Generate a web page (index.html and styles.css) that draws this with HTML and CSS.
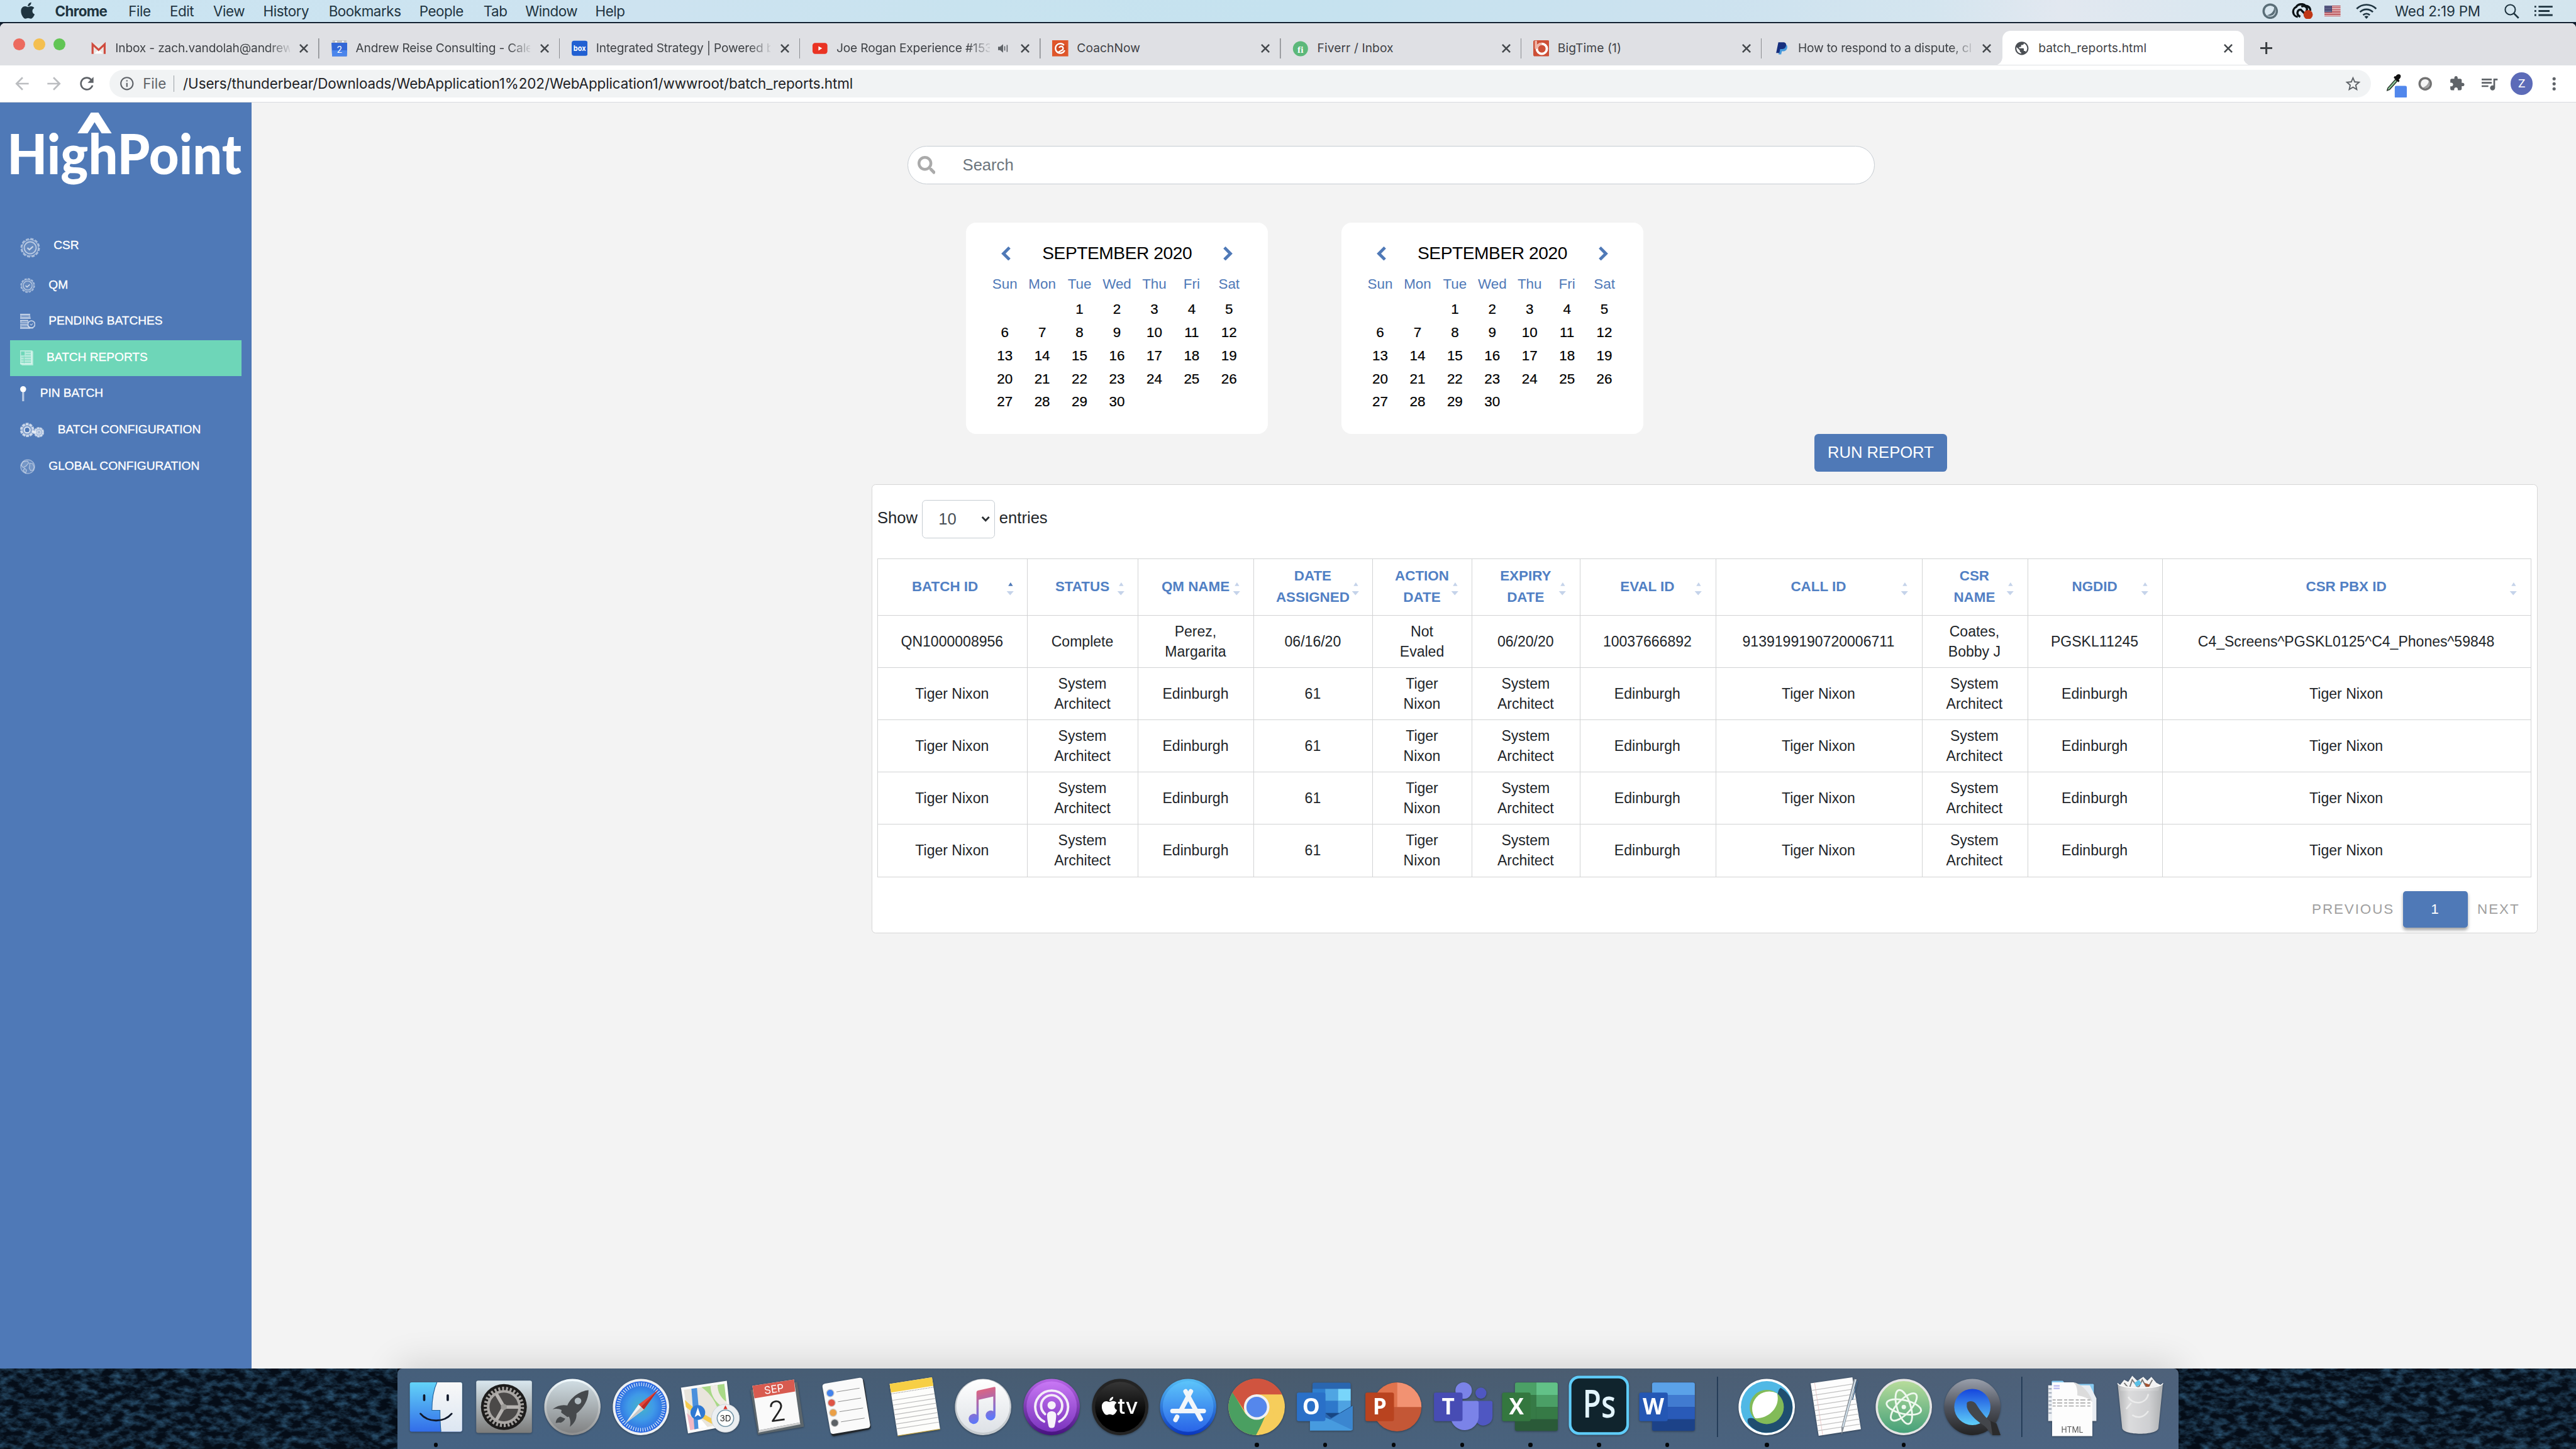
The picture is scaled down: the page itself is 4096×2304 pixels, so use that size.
FILE: index.html
```html
<!DOCTYPE html>
<html lang="en">
<head>
<meta charset="utf-8">
<title>batch_reports.html</title>
<link rel="stylesheet" href="styles.css">
</head>
<body>
<svg class="defs" width="0" height="0" aria-hidden="true">
  <defs>
    <symbol id="apple" viewBox="0 0 384 512"><path d="M318.7 268.7c-.2-36.7 16.4-64.4 50-84.8-18.8-26.9-47.2-41.7-84.7-44.6-35.5-2.8-74.3 20.7-88.5 20.7-15 0-49.4-19.7-76.4-19.7C63.3 141.2 4 184.8 4 273.5q0 39.3 14.4 81.2c12.8 36.7 59 126.7 107.2 125.2 25.2-.6 43-17.9 75.8-17.9 31.8 0 48.3 17.9 76.4 17.9 48.6-.7 90.4-82.5 102.6-119.3-65.2-30.7-61.7-90-61.7-91.9zm-56.6-164.2c27.3-32.4 24.8-61.9 24-72.5-24.1 1.4-52 16.4-67.9 34.9-17.5 19.8-27.8 44.3-25.6 71.9 26.1 2 49.9-11.4 69.5-34.3z"/></symbol>
    <symbol id="close" viewBox="0 0 10 10"><path d="M1.2 1.2l7.6 7.6M8.8 1.2L1.2 8.8" fill="none" stroke="#45494d" stroke-width="1.6"/></symbol>
    <symbol id="sort" viewBox="0 0 8 14"><path class="sort-up" d="M4.3 .6l2.3 3.6H2z"/><path class="sort-down" d="M.4 9.4h7L3.9 13.4z"/></symbol>
    <symbol id="seal" viewBox="0 0 20 20"><circle cx="10" cy="10" r="9" fill="none" stroke="#fff" stroke-width="1.4" stroke-opacity=".5" stroke-dasharray="3.2 1.5"/><circle cx="10" cy="10" r="8" fill="none" stroke="#fff" stroke-width="1" stroke-opacity=".45"/><circle cx="10" cy="10" r="6" fill="#fff" fill-opacity=".12" stroke="#fff" stroke-width="1.3" stroke-opacity=".55"/><path d="M7.2 10.1l2 1.8 3.6-3.2" fill="none" stroke="#fff" stroke-width="1.4" stroke-opacity=".65"/></symbol>
    <linearGradient id="gSilver" x2="0" y2="1"><stop offset="0" stop-color="#d9e7ee"/><stop offset="1" stop-color="#7b7b7a"/></linearGradient>
    <linearGradient id="gLaunch" x2="0" y2="1"><stop offset="0" stop-color="#cfdce2"/><stop offset="1" stop-color="#818283"/></linearGradient>
    <linearGradient id="gRim" x2="0" y2="1"><stop offset="0" stop-color="#f2fbff"/><stop offset="1" stop-color="#8e8e8e"/></linearGradient>
    <linearGradient id="gFinder" x2="0" y2="1"><stop offset="0" stop-color="#63d3f8"/><stop offset="1" stop-color="#326de9"/></linearGradient>
    <linearGradient id="gFinderR" x2="0" y2="1"><stop offset="0" stop-color="#f8f8f8"/><stop offset="1" stop-color="#dce6f2"/></linearGradient>
    <radialGradient id="gSafari"><stop offset="0" stop-color="#45b3c8"/><stop offset=".5" stop-color="#3f9ae8"/><stop offset="1" stop-color="#2a66e0"/></radialGradient>
    <linearGradient id="gMusic" x2="0" y2="1"><stop offset="0" stop-color="#fff"/><stop offset="1" stop-color="#dde1e6"/></linearGradient>
    <linearGradient id="gNote" x1="0" x2=".2" y2="1"><stop offset="0" stop-color="#f2636c"/><stop offset=".45" stop-color="#b268a8"/><stop offset="1" stop-color="#5a78fb"/></linearGradient>
    <linearGradient id="gPod" x2="0" y2="1"><stop offset="0" stop-color="#c877f4"/><stop offset="1" stop-color="#7a34bd"/></linearGradient>
    <linearGradient id="gPodRim" x2="0" y2="1"><stop offset="0" stop-color="#b765e6"/><stop offset="1" stop-color="#46127f"/></linearGradient>
    <linearGradient id="gTv" x2="0" y2="1"><stop offset="0" stop-color="#363636"/><stop offset=".7" stop-color="#000"/></linearGradient>
    <linearGradient id="gStore" x2="0" y2="1"><stop offset="0" stop-color="#5cc4fa"/><stop offset="1" stop-color="#2964e8"/></linearGradient>
    <linearGradient id="gStoreRim" x2="0" y2="1"><stop offset="0" stop-color="#55bdf5"/><stop offset="1" stop-color="#0a36bd"/></linearGradient>
    <linearGradient id="gAtom" x2="0" y2="1"><stop offset="0" stop-color="#b7dc9b"/><stop offset="1" stop-color="#45a079"/></linearGradient>
    <linearGradient id="gQt" x2="0" y2="1"><stop offset="0" stop-color="#9aa0ac"/><stop offset=".5" stop-color="#50545e"/><stop offset="1" stop-color="#232323"/></linearGradient>
    <linearGradient id="gQtIn" x2="0" y2="1"><stop offset="0" stop-color="#1545dd"/><stop offset="1" stop-color="#5fd0fa"/></linearGradient>
    <linearGradient id="gTrash" x2="1" y2="0"><stop offset="0" stop-color="#b9babb"/><stop offset=".25" stop-color="#e4e4e4"/><stop offset=".7" stop-color="#d6d7d8"/><stop offset="1" stop-color="#b2b4b5"/></linearGradient>
    <filter id="waves" x="0" y="0" width="100%" height="100%"><feTurbulence type="fractalNoise" baseFrequency=".09 .16" numOctaves="4" seed="7"/><feColorMatrix values="0 0 0 0 .03  0 0 0 0 .11  0 0 0 0 .21  1.8 0 0 0 -.68"/></filter>
  </defs>
</svg>

<header class="menubar">
  <nav class="menubar-left">
    <svg class="apple" viewBox="0 0 384 512" fill="#1f3440"><use href="#apple"/></svg>
    <b>Chrome</b><span>File</span><span>Edit</span><span>View</span><span>History</span><span>Bookmarks</span><span>People</span><span>Tab</span><span>Window</span><span>Help</span>
  </nav>
  <div class="menubar-right">
    <svg width="16" height="16" viewBox="0 0 16 16"><circle cx="8" cy="8" r="6.600" fill="none" stroke="#5a6e78" stroke-width="2.200"/><path d="M11.800 2.800c.6 4-1.600 8-7 9.200 4 1.800 8-.6 8.200-4.200 0-2-.4-3.800-1.200-5z" fill="#5a6e78"/></svg>
    <svg width="21" height="16" viewBox="0 0 21 16"><path d="M6 13.700A5.200 5.200 0 0 1 4.500 3.800C6 .6 12 .2 13.500 2.500c3.400.4 5 2.500 5 5M8.500 13.500C4 11.500 5.500 6 9 6.500l4 4M9.500 3.500c4-2 7 1.500 5 4.500" fill="none" stroke="#0c1216" stroke-width="2.100"/><circle cx="16.300" cy="11.400" r="4.600" fill="#bf3716"/></svg>
    <svg width="16" height="11" viewBox="0 0 16 11"><rect width="16" height="11" fill="#f4eeee"/><path d="M0 .4h16M0 2.100h16M0 3.800h16M0 5.500h16M0 7.200h16M0 8.900h16M0 10.600h16" stroke="#ad2b35" stroke-width=".85"/><rect width="7.500" height="6.500" fill="#41436f"/><path d="M.8 1.200h6.400M.8 2.800h6.400M.8 4.400h6.400M.8 5.800h6.400" stroke="#c9cbe0" stroke-width=".5" stroke-dasharray=".6 .7"/></svg>
    <svg width="21" height="15" viewBox="0 0 21 15"><g fill="none" stroke="#1f3440" stroke-width="1.700"><path d="M.8 5a13.600 13.600 0 0 1 19.400 0"/><path d="M4.100 8.200a9 9 0 0 1 12.800 0"/><path d="M7.200 11.200a4.700 4.700 0 0 1 6.600 0"/></g><path d="M10.500 15l-2-2.200a2.800 2.800 0 0 1 4 0z" fill="#1f3440"/></svg>
    <span class="clock">Wed 2:19 PM</span>
    <svg width="15" height="15" viewBox="0 0 15 15"><circle cx="5.900" cy="5.900" r="5" fill="none" stroke="#1f3440" stroke-width="1.300"/><path d="M9.600 9.600l4.600 4.600" stroke="#1f3440" stroke-width="1.700"/></svg>
    <svg width="18" height="11" viewBox="0 0 18 11"><path d="M0 1h1.700M4 1h14M0 5.300h1.700M4 5.300h11M0 9.400h1.700M4 9.400h14" stroke="#1f3440" stroke-width="1.800"/></svg>
  </div>
</header>

<section class="window">
  <div class="tabstrip">
    <div class="lights"><i class="red"></i><i class="yellow"></i><i class="green"></i></div>
    <div class="tab">
      <svg class="fav" viewBox="0 0 16 16"><path d="M1.500 3.500h13v10h-13z" fill="#e9e6e3"/><path d="M4 13.300L8 9l4 4.300z" fill="#fff"/><path d="M2 13.600V4l6 5.600L14 4v9.600" fill="none" stroke="#cf4b3e" stroke-width="2"/></svg>
      <span class="title faded">Inbox - zach.vandolah@andrew</span><svg class="x"><use href="#close"/></svg>
    </div>
    <div class="tab">
      <svg class="fav" viewBox="0 0 16 16"><path d="M1 0h14v3H1z" fill="#c2c2c2"/><circle cx="4.600" cy="1.400" r=".9" fill="#fff"/><circle cx="11.400" cy="1.400" r=".9" fill="#fff"/><path d="M0 2.500h16L15.300 16H.7z" fill="#3367d6"/><path d="M.5 10h15l-.3 6H.7z" fill="#4a85ec"/><text x="8" y="12.600" text-anchor="middle" font-size="9" fill="#fff" font-family="Roboto,sans-serif">2</text></svg>
      <span class="title faded">Andrew Reise Consulting - Cale</span><svg class="x"><use href="#close"/></svg>
    </div>
    <div class="tab">
      <svg class="fav" viewBox="0 0 16 16"><rect y=".5" width="16" height="15" rx="2.500" fill="#2160d2"/><text x="8" y="10.700" text-anchor="middle" font-size="7.500" font-weight="700" fill="#fff" textLength="12.500" lengthAdjust="spacingAndGlyphs" font-family="Inter,sans-serif">box</text></svg>
      <span class="title faded">Integrated Strategy | Powered b</span><svg class="x"><use href="#close"/></svg>
    </div>
    <div class="tab audible">
      <svg class="fav" viewBox="0 0 16 16"><rect x=".6" y="2.600" width="14.800" height="11" rx="2.600" fill="#ea3323"/><path d="M6.500 5.900v4.400L10.200 8z" fill="#fff"/></svg>
      <span class="title faded">Joe Rogan Experience #153</span>
      <svg class="audio" viewBox="0 0 10 10"><path d="M0 3.300h2L5 .8v8.400L2 6.700H0z" fill="#5f6368"/><path d="M6.600 2.800v4.400M9 1.600v6.800" stroke="#5f6368"/></svg>
      <svg class="x"><use href="#close"/></svg>
    </div>
    <div class="tab">
      <svg class="fav" viewBox="0 0 16 16"><rect width="16" height="16" fill="#e0562a"/><circle cx="8" cy="8" r="6.200" fill="#d04a22"/><path d="M11.800 5A4.800 4.800 0 1 0 12.500 10M7 7.500a2 2 0 1 1 2.500 2.500L5 12.500" fill="none" stroke="#fff" stroke-width="1.500"/></svg>
      <span class="title">CoachNow</span><svg class="x"><use href="#close"/></svg>
    </div>
    <div class="tab">
      <svg class="fav" viewBox="0 0 16 16"><circle cx="8" cy="8.500" r="7.500" fill="#5cb87a"/><text x="8" y="12.300" text-anchor="middle" font-size="9.500" font-weight="700" fill="#fff" font-family="Liberation Serif,serif">fi</text></svg>
      <span class="title">Fiverr / Inbox</span><svg class="x"><use href="#close"/></svg>
    </div>
    <div class="tab">
      <svg class="fav" viewBox="0 0 16 16"><rect width="16" height="16" rx="1.600" fill="#cd4f36"/><circle cx="8.500" cy="8.500" r="5" fill="none" stroke="#fff" stroke-width="2.400"/><path d="M2.600 .5v8" stroke="#eeb5a8" stroke-width="2.200"/><path d="M3.500 8.500a5 5 0 0 1 5-5" fill="none" stroke="#eeb5a8" stroke-width="2.400"/></svg>
      <span class="title">BigTime (1)</span><svg class="x"><use href="#close"/></svg>
    </div>
    <div class="tab last">
      <svg class="fav" viewBox="0 0 16 16"><path d="M6.500 4h4.500c2.500 0 3 1.800 2.600 3.600-.6 2.400-2 3.300-4 3.300H8.300L7.600 14H5z" fill="#4598db"/><path d="M4.800 2h4.800c2.600 0 3.200 1.700 2.800 3.500-.6 2.500-2.200 3.300-4.400 3.300H6.600l-.8 3.800H2.600z" fill="#172f7e"/></svg>
      <span class="title faded">How to respond to a dispute, cl</span><svg class="x"><use href="#close"/></svg>
    </div>
    <div class="tab active">
      <svg class="fav" viewBox="0 0 24 24" fill="#4b4f54"><path d="M12 2C6.480 2 2 6.480 2 12s4.480 10 10 10 10-4.480 10-10S17.520 2 12 2zm-1 17.930c-3.950-.49-7-3.850-7-7.930 0-.62.08-1.210.21-1.790L9 15v1c0 1.100.9 2 2 2v1.930zm6.900-2.540c-.26-.81-1-1.390-1.900-1.390h-1v-3c0-.55-.45-1-1-1H8v-2h2c.55 0 1-.45 1-1V7h2c1.100 0 2-.9 2-2v-.41c2.930 1.190 5 4.060 5 7.410 0 2.080-.8 3.970-2.100 5.390z"/></svg>
      <span class="title">batch_reports.html</span><svg class="x"><use href="#close"/></svg>
    </div>
    <svg class="newtab" viewBox="0 0 12 12"><path d="M6 0v12M0 6h12" stroke="#3c4043" stroke-width="1.900"/></svg>
  </div>

  <div class="toolbar">
    <div class="slot"><svg width="20" height="20" viewBox="0 0 24 24" fill="#bbbdc0"><path d="M20 11H7.830l5.590-5.590L12 4l-8 8 8 8 1.410-1.410L7.830 13H20v-2z"/></svg></div>
    <div class="slot"><svg width="20" height="20" viewBox="0 0 24 24" fill="#bbbdc0"><path d="M4 11h12.170l-5.590-5.590L12 4l8 8-8 8-1.410-1.410L16.170 13H4v-2z"/></svg></div>
    <div class="slot"><svg width="20" height="20" viewBox="0 0 24 24" fill="#5f6368"><path d="M17.650 6.350C16.200 4.900 14.210 4 12 4c-4.420 0-7.990 3.580-7.990 8s3.570 8 7.990 8c3.730 0 6.840-2.550 7.730-6h-2.080c-.82 2.330-3.040 4-5.650 4-3.310 0-6-2.690-6-6s2.690-6 6-6c1.660 0 3.140.69 4.220 1.780L13 11h7V4l-2.350 2.350z"/></svg></div>
    <div class="omnibox">
      <svg width="16" height="16" viewBox="0 0 24 24" fill="#5f6368"><path d="M11 7h2v2h-2zm0 4h2v6h-2zm1-9C6.480 2 2 6.480 2 12s4.480 10 10 10 10-4.480 10-10S17.520 2 12 2zm0 18c-4.410 0-8-3.590-8-8s3.590-8 8-8 8 3.590 8 8-3.590 8-8 8z"/></svg>
      <span class="scheme">File</span>
      <span class="url">/Users/thunderbear/Downloads/WebApplication1%202/WebApplication1/wwwroot/batch_reports.html</span>
      <svg class="star" width="18" height="18" viewBox="0 0 24 24" fill="#5f6368"><path d="M22 9.240l-7.190-.62L12 2 9.190 8.630 2 9.240l5.460 4.730L5.820 21 12 17.270 18.180 21l-1.630-7.030L22 9.240zM12 15.400l-3.760 2.270 1-4.280-3.320-2.880 4.380-.38L12 6.100l1.710 4.040 4.380.38-3.320 2.880 1 4.280L12 15.400z"/></svg>
    </div>
    <div class="slot"><svg width="32" height="28" viewBox="0 0 32 28"><path d="M10.500 20.500l.6-2.300 7.500-8.500 1.800 1.600-7.500 8.300z" fill="#8fc79a" stroke="#26352a" stroke-width=".9"/><path d="M17 8l4.800 4.400 1-1.400-.8-1.200c2-1.800 2.600-3.800 1.300-4.900-1.400-1.200-3.300-.2-4.500 1.600l-.9-.3z" fill="#111"/><rect x="18" y="16" width="12" height="12" rx="1.500" fill="#5187ec"/></svg></div>
    <div class="slot"><svg width="14" height="14" viewBox="0 0 14 14"><circle cx="7" cy="7" r="5.600" fill="#f5f5f5" stroke="#727272" stroke-width="2.200"/><path d="M10.500 3.200C10.600 7 8.500 9.800 4 11c4.500 1.400 7.500-1 7.300-4.500z" fill="#a0a0a0"/></svg></div>
    <div class="slot"><svg width="16" height="16" viewBox="0 0 24 24" fill="#5f6368"><path d="M20.500 11H19V7c0-1.100-.9-2-2-2h-4V3.500C13 2.120 11.880 1 10.500 1S8 2.120 8 3.500V5H4c-1.100 0-1.990.9-1.990 2v3.800H3.500c1.490 0 2.700 1.210 2.700 2.700s-1.210 2.700-2.700 2.700H2V20c0 1.100.9 2 2 2h3.800v-1.500c0-1.490 1.210-2.700 2.700-2.700 1.490 0 2.700 1.210 2.700 2.700V22H17c1.100 0 2-.9 2-2v-4h1.500c1.380 0 2.500-1.120 2.500-2.500S21.880 11 20.500 11z"/></svg></div>
    <div class="slot"><svg width="20" height="20" viewBox="0 0 24 24" fill="#5f6368"><path d="M15 6H3v2h12V6zm0 4H3v2h12v-2zM3 16h8v-2H3v2zM17 6v8.180c-.31-.11-.65-.18-1-.18-1.660 0-3 1.340-3 3s1.340 3 3 3 3-1.340 3-3V8h3V6h-5z"/></svg></div>
    <div class="slot"><span class="avatar">Z</span></div>
    <div class="slot"><svg width="4" height="14" viewBox="0 0 4 14" fill="#5f6368"><circle cx="2" cy="2" r="1.600"/><circle cx="2" cy="7" r="1.600"/><circle cx="2" cy="12" r="1.600"/></svg></div>
  </div>

  <div class="page">
    <aside class="sidebar">
      <svg class="logo" viewBox="0 0 230 72" fill="#fff"><path d="M80.400 0h7.400L101 20.700H91L84 9.500l-7 11.200H67z"/><text x="-3" y="61.300" textLength="233" lengthAdjust="spacingAndGlyphs">HighPoint</text></svg>
      <nav class="nav">
        <a class="csr"><svg width="20" height="20"><use href="#seal"/></svg><span>CSR</span></a>
        <a><svg width="15" height="15"><use href="#seal"/></svg><span>QM</span></a>
        <a><svg width="15" height="15" viewBox="0 0 15 15"><path d="M0 0h9.800l.7 4.800H0zM0 6h8v3.400H0zM0 10.600h8.500l1.500 4.200H0z" fill="#fff" fill-opacity=".45"/><path d="M1.500 2.400h7M1.500 7.600h5.500M1.500 12.500h6" stroke="#4f79b7" stroke-opacity=".6" stroke-width=".9"/><path d="M0 .4h10M0 4.500h10.500M0 6.800h8M0 10.300h7M0 14.300h13" stroke="#fff" stroke-opacity=".55" stroke-width=".8"/><circle cx="11.200" cy="10.400" r="3.500" fill="#4f79b7" stroke="#fff" stroke-opacity=".65" stroke-width="1.100"/><path d="M9.800 10.200l1.300 1 1.500-1.600" fill="none" stroke="#fff" stroke-opacity=".6" stroke-width=".8"/></svg><span>PENDING BATCHES</span></a>
        <a class="current"><svg width="13" height="15" viewBox="0 0 13 15"><path d="M0 0h11.800L13 1.200V15H2L0 13.500z" fill="#fff" fill-opacity=".5"/><path d="M1.200 1.500h3v3.200h-3zM5.500 2h5M5.500 4.300h5M1.200 7h9.500M1.200 9.500h9.500M1.200 12h9.500M4 6v7" stroke="#6ed6b8" stroke-width=".8" fill="#6ed6b8" stroke-opacity=".75"/><path d="M0 13.400h11.500V1" fill="none" stroke="#fff" stroke-opacity=".5"/></svg><span>BATCH REPORTS</span></a>
        <a><svg width="6.500" height="15" viewBox="0 0 6.500 15"><path d="M3 5v10" stroke="#fff" stroke-opacity=".6" stroke-width="2"/><circle cx="3" cy="3" r="3" fill="#fff"/></svg><span>PIN BATCH</span></a>
        <a><svg width="24" height="15" viewBox="0 0 24 15"><circle cx="7" cy="7.300" r="6" fill="#fff" fill-opacity=".35" stroke="#fff" stroke-width="2.200" stroke-opacity=".65" stroke-dasharray="2.900 .9"/><circle cx="7" cy="7.300" r="2.800" fill="#4f79b7" stroke="#fff" stroke-opacity=".8" stroke-width="1.100"/><circle cx="18.700" cy="9.600" r="4.300" fill="#fff" fill-opacity=".5" stroke="#fff" stroke-width="1.800" stroke-opacity=".6" stroke-dasharray="2.500 .5"/><path d="M12 9.500h4" stroke="#fff" stroke-opacity=".55" stroke-width="3"/><circle cx="18.700" cy="9.600" r="1.800" fill="none" stroke="#fff" stroke-opacity=".5" stroke-width=".8"/></svg><span>BATCH CONFIGURATION</span></a>
        <a><svg width="15" height="15" viewBox="0 0 15 15"><circle cx="7.500" cy="7.500" r="6.900" fill="#fff" fill-opacity=".12" stroke="#fff" stroke-width=".9" stroke-opacity=".4"/><path d="M3 2.500l4.500-.5 1 1.800-2.500 3L3 8.500 1 6zM9.500 4l3 .5 1.500 3.500-1 3-2.500.5-1.500-2.500.5-3zM4.500 9l2 2-1 3-2.500-2.500z" fill="#fff" fill-opacity=".12" stroke="#fff" stroke-width=".8" stroke-opacity=".45"/></svg><span>GLOBAL CONFIGURATION</span></a>
      </nav>
    </aside>

    <main class="main">
      <div class="search">
        <svg width="18" height="18" viewBox="0 0 512 512" fill="#aaa"><path d="M505 442.700L405.300 343c-4.500-4.500-10.600-7-17-7H372c27.600-35.300 44-79.700 44-128C416 93.100 322.900 0 208 0S0 93.100 0 208s93.100 208 208 208c48.300 0 92.700-16.400 128-44v16.300c0 6.400 2.500 12.500 7 17l99.700 99.700c9.400 9.400 24.600 9.400 33.900 0l28.300-28.300c9.400-9.400 9.400-24.600.1-34zM208 336c-70.700 0-128-57.200-128-128 0-70.700 57.200-128 128-128 70.700 0 128 57.200 128 128 0 70.700-57.200 128-128 128z"/></svg>
        <span>Search</span>
      </div>

      <div class="calendars">
        <section class="calendar">
          <header><svg viewBox="0 0 10 14"><path d="M8.200 1L2.200 7l6 6"/></svg><h2>SEPTEMBER 2020</h2><svg viewBox="0 0 10 14"><path d="M1.800 1l6 6-6 6"/></svg></header>
          <div class="days names"><span>Sun</span><span>Mon</span><span>Tue</span><span>Wed</span><span>Thu</span><span>Fri</span><span>Sat</span></div>
          <div class="days"><span></span><span></span><span>1</span><span>2</span><span>3</span><span>4</span><span>5</span><span>6</span><span>7</span><span>8</span><span>9</span><span>10</span><span>11</span><span>12</span><span>13</span><span>14</span><span>15</span><span>16</span><span>17</span><span>18</span><span>19</span><span>20</span><span>21</span><span>22</span><span>23</span><span>24</span><span>25</span><span>26</span><span>27</span><span>28</span><span>29</span><span>30</span></div>
        </section>
        <section class="calendar">
          <header><svg viewBox="0 0 10 14"><path d="M8.200 1L2.200 7l6 6"/></svg><h2>SEPTEMBER 2020</h2><svg viewBox="0 0 10 14"><path d="M1.800 1l6 6-6 6"/></svg></header>
          <div class="days names"><span>Sun</span><span>Mon</span><span>Tue</span><span>Wed</span><span>Thu</span><span>Fri</span><span>Sat</span></div>
          <div class="days"><span></span><span></span><span>1</span><span>2</span><span>3</span><span>4</span><span>5</span><span>6</span><span>7</span><span>8</span><span>9</span><span>10</span><span>11</span><span>12</span><span>13</span><span>14</span><span>15</span><span>16</span><span>17</span><span>18</span><span>19</span><span>20</span><span>21</span><span>22</span><span>23</span><span>24</span><span>25</span><span>26</span><span>27</span><span>28</span><span>29</span><span>30</span></div>
        </section>
      </div>

      <button class="run">RUN REPORT</button>

      <section class="card">
        <div class="length"><span>Show</span><span class="select">10<svg viewBox="0 0 10 7"><path d="M1.200 1.200L5 5.200l3.800-4" fill="none" stroke="#2b2f33" stroke-width="2"/></svg></span><span>entries</span></div>
        <table>
          <colgroup><col class="c1"><col class="c2"><col class="c3"><col class="c4"><col class="c5"><col class="c6"><col class="c7"><col class="c8"><col class="c9"><col class="c10"><col class="c11"></colgroup>
          <thead><tr>
            <th class="sorted">BATCH ID<svg><use href="#sort"/></svg></th>
            <th>STATUS<svg><use href="#sort"/></svg></th>
            <th>QM NAME<svg><use href="#sort"/></svg></th>
            <th>DATE<br>ASSIGNED<svg><use href="#sort"/></svg></th>
            <th>ACTION<br>DATE<svg><use href="#sort"/></svg></th>
            <th>EXPIRY<br>DATE<svg><use href="#sort"/></svg></th>
            <th>EVAL ID<svg><use href="#sort"/></svg></th>
            <th>CALL ID<svg><use href="#sort"/></svg></th>
            <th>CSR<br>NAME<svg><use href="#sort"/></svg></th>
            <th>NGDID<svg><use href="#sort"/></svg></th>
            <th>CSR PBX ID<svg><use href="#sort"/></svg></th>
          </tr></thead>
          <tbody>
            <tr><td>QN1000008956</td><td>Complete</td><td>Perez,<br>Margarita</td><td>06/16/20</td><td>Not<br>Evaled</td><td>06/20/20</td><td>10037666892</td><td>9139199190720006711</td><td>Coates,<br>Bobby J</td><td>PGSKL11245</td><td>C4_Screens^PGSKL0125^C4_Phones^59848</td></tr>
            <tr><td>Tiger Nixon</td><td>System<br>Architect</td><td>Edinburgh</td><td>61</td><td>Tiger<br>Nixon</td><td>System<br>Architect</td><td>Edinburgh</td><td>Tiger Nixon</td><td>System<br>Architect</td><td>Edinburgh</td><td>Tiger Nixon</td></tr>
            <tr><td>Tiger Nixon</td><td>System<br>Architect</td><td>Edinburgh</td><td>61</td><td>Tiger<br>Nixon</td><td>System<br>Architect</td><td>Edinburgh</td><td>Tiger Nixon</td><td>System<br>Architect</td><td>Edinburgh</td><td>Tiger Nixon</td></tr>
            <tr><td>Tiger Nixon</td><td>System<br>Architect</td><td>Edinburgh</td><td>61</td><td>Tiger<br>Nixon</td><td>System<br>Architect</td><td>Edinburgh</td><td>Tiger Nixon</td><td>System<br>Architect</td><td>Edinburgh</td><td>Tiger Nixon</td></tr>
            <tr><td>Tiger Nixon</td><td>System<br>Architect</td><td>Edinburgh</td><td>61</td><td>Tiger<br>Nixon</td><td>System<br>Architect</td><td>Edinburgh</td><td>Tiger Nixon</td><td>System<br>Architect</td><td>Edinburgh</td><td>Tiger Nixon</td></tr>
          </tbody>
        </table>
        <div class="pager"><span>PREVIOUS</span><b>1</b><span>NEXT</span></div>
      </section>
    </main>
  </div>
</section>

<footer class="desktop">
  <svg class="sea" width="2560" height="80"><rect width="2560" height="80" fill="#050d18"/><rect width="395" height="80" filter="url(#waves)"/><rect x="2165" width="395" height="80" filter="url(#waves)"/></svg>
  <div class="dock">
    <div class="app run-dot"><svg viewBox="0 0 64 64"><rect x="6" y="7.500" width="52" height="49" rx="2" fill="url(#gFinder)"/><path d="M33 7.500H56a2 2 0 0 1 2 2v45a2 2 0 0 1-2 2H37C36.300 50 36 42 36 35.300H28C28 25 30 14 33 7.500z" fill="url(#gFinderR)"/><path d="M33 7.500C30 14 28 25 28 35.300h8C36 42 36.300 50 37 56.500" fill="none" stroke="#24639c" stroke-width=".7"/><path d="M20.300 20.500v4.500M43.700 20.500v4.500" stroke="#10182a" stroke-width="2.300" stroke-linecap="round"/><path d="M16.600 38.700c7.500 9 23.500 9 31 0" fill="none" stroke="#10182a" stroke-width="1.800" stroke-linecap="round"/></svg></div>
    <div class="app"><svg viewBox="0 0 64 64"><rect x="4.500" y="5.800" width="55.400" height="52" rx="2" fill="url(#gSilver)"/><circle cx="32" cy="32" r="22.800" fill="#1d1c1b"/><circle cx="32" cy="32" r="18.300" fill="none" stroke="#a3a09d" stroke-width="3.500" stroke-dasharray="2 1.833"/><circle cx="32" cy="32" r="15.600" fill="#4b4948" stroke="#aaa7a4" stroke-width="2.600"/><path d="M32 32h15M32 32l-7.500-13M32 32l-7.500 13" stroke="#b5b2af" stroke-width="3.400"/><circle cx="32" cy="32" r="3" fill="#9b9996"/></svg></div>
    <div class="app"><svg viewBox="0 0 64 64"><circle cx="32" cy="32" r="28" fill="url(#gRim)"/><circle cx="32" cy="32" r="25.800" fill="url(#gLaunch)"/><path d="M48 15.300C39 16 30 23 27 30.500c-5-1-10 0-14.800 3.800 3.500-1 6.800-.4 9 .7l-.4 2.500 6.200 4.500 1.500-.5c1.500 3 2 6.500.9 10.300C34 48 36.500 44 36 38.500 43 33 48 25 48 15.300z" fill="#46494c"/><path d="M20 41.500c-3 1-4.500 3.500-4.600 6.500 2-.6 3.300-.6 5-.4 2-.6 3.800-2.600 4.500-4z" fill="#46494c"/><circle cx="37.500" cy="26" r="3.300" fill="#b2bcc1"/></svg></div>
    <div class="app"><svg viewBox="0 0 64 64"><circle cx="32" cy="32" r="28" fill="#eef0f2"/><circle cx="32" cy="32" r="25.600" fill="url(#gSafari)"/><circle cx="32" cy="32" r="22.600" fill="none" stroke="#e8f2fb" stroke-width="3.600" stroke-dasharray=".7 1.667"/><path d="M49 15L34.800 34.500l-5.200-5z" fill="#e2483d"/><path d="M49 15L34.800 34.500 32 32z" fill="#b92c26"/><path d="M16.500 48.300l13.100-18.800 5.200 5z" fill="#f3f3f3"/><path d="M16.500 48.300L32 32l2.800 2.500z" fill="#c8c8c8"/></svg></div>
    <div class="app"><svg viewBox="0 0 64 64"><path d="M3.600 12.800L49.200 6 54 50 10.600 58.300z" fill="#fafafa"/><path d="M6.500 15L46.700 9l4.300 39L12.800 55z" fill="#e9e5dc"/><path d="M24 12.400L46.700 9l4.300 39-8 1.500C43 38 38 22 24 12.400z" fill="#a9d987"/><path d="M33 11l7-1c0 8 4 14 9.300 17l1.200 7C40 31 33 22 33 11z" fill="#efece5"/><path d="M7.500 25c10 10 28 20 40 24l-9 1.500C28 46 16 38 8.500 32z" fill="#f6cc4f"/><path d="M9.500 38l16 14.500L12.800 55z" fill="#f0b7c3"/><path d="M14 13.900l5.500-.8L23 53l-6 1.200z" fill="#4a90dc"/><path d="M20 40l10 12-9 1.500z" fill="#fff"/><circle cx="20.400" cy="37.500" r="7.300" fill="#2f79d3"/><path d="M20.400 32.500l3.200 9.500-3.200-2-3.200 2z" fill="#fff"/><circle cx="47.800" cy="43.200" r="13.900" fill="#eceff2" stroke="#cfd4d9" stroke-width=".6"/><circle cx="47.800" cy="43.200" r="8.200" fill="#fff" stroke="#7596a8" stroke-width="1"/><path d="M47.800 30.500l2 3.500h-4z" fill="#d93025"/><text x="47.800" y="46.300" text-anchor="middle" font-size="8.500" fill="#222" font-family="Inter,sans-serif">3D</text></svg></div>
    <div class="app"><svg viewBox="0 0 64 64"><path d="M4.500 15l46.500-8 6.700 44.500L12 59.500z" fill="#5c666c"/><path d="M6.400 11l41.400-6.300 6 42.600L13 55.200z" fill="#fafafa"/><path d="M13 55.200l40.800-7.900.4 2L12.400 57.500z" fill="#cfcfcf"/><path d="M6.400 11l41.400-6.300L49 16.500 8.500 23.500z" fill="#d85b50"/><text transform="translate(28.500 17.800) rotate(-9)" text-anchor="middle" font-size="10.500" fill="#fff" font-family="Inter,sans-serif">SEP</text><text transform="translate(32.300 46) rotate(-8)" text-anchor="middle" font-size="28" font-weight="300" fill="#222" font-family="Inter,sans-serif">2</text></svg></div>
    <div class="app"><svg viewBox="0 0 64 64"><path d="M12 9.300L46 3.400q3-.3 3.300 2.500L56 50q.3 3-2.500 3.500L20 60q-3 .3-3.300-2.500L9.400 12.500q-.3-2.500 2.600-3.200z" transform="translate(.6 1)" fill="#22272c"/><path d="M11.200 8.800L45.500 3q3-.3 3.300 2.500L56 49.500q.3 3-2.500 3.500L19.500 58.700q-2.600.3-3-2.500L8.600 12q-.3-2.500 2.600-3.200z" fill="#fafafa"/><g stroke="#8c8c8c" stroke-width=".6"><path d="M22.500 17l23-3.700M24 26.800l23-3.700M25.500 36.700L49 33M27 46.800l23.500-3.800"/></g><g stroke="#ccc" stroke-width=".8"><circle cx="16.300" cy="18.200" r="3.700" fill="#4383ec"/><circle cx="17.700" cy="27.800" r="3.700" fill="#df5547"/><circle cx="19.200" cy="37.700" r="3.700" fill="#eba047"/><circle cx="20.800" cy="47.800" r="3.700" fill="#5c6165"/></g></svg></div>
    <div class="app"><svg viewBox="0 0 64 64"><path d="M7.200 9l42.100-6.500 8.100 51.500-42.100 6.700z" fill="#fdfdfb"/><path d="M7.200 9l42.100-6.500 1.400 8.500-42.100 6.700z" fill="#f7cf45"/><path d="M8.800 19l42-6.700" stroke="#777" stroke-width=".6" stroke-dasharray=".8 .8"/><path d="M9.800 25.500l42-6.700M10.600 30.200l42-6.700M11.400 34.900l42-6.700M12.100 39.600l42-6.700M12.800 44.300l42-6.700M13.500 49l42-6.700M14.200 53.700l42-6.700" stroke="#bdbdbd" stroke-width=".7"/><path d="M15.300 60.700L57.400 54" stroke="#b79a3c" stroke-width=".8"/></svg></div>
    <div class="app"><svg viewBox="0 0 64 64"><circle cx="32" cy="32" r="28" fill="#c6cbcf"/><circle cx="32" cy="31" r="26.500" fill="url(#gMusic)"/><path d="M25.400 17.500q0-1.500 1.500-1.900L43.300 12q1-.1 1 1v27.300a4.900 4.900 0 1 1-2.200-4V21.600L27.600 24.800V44a5 5 0 1 1-2.200-4.300z" fill="url(#gNote)"/></svg></div>
    <div class="app"><svg viewBox="0 0 64 64"><circle cx="32" cy="32" r="28" fill="url(#gPodRim)"/><circle cx="32" cy="31.500" r="25" fill="url(#gPod)"/><g fill="none" stroke="#f4eef8" stroke-width="2.400" stroke-linecap="round"><path d="M24.500 46.500a16.300 16.300 0 1 1 15 0"/><path d="M25.500 39a10.500 10.500 0 1 1 13 0"/></g><circle cx="32" cy="30.300" r="4.100" fill="#f7f3fa"/><path d="M27.500 40c0-5 9-5 9 0 0 4-1 9-1.600 11.200-.6 2.200-5.200 2.200-5.800 0C28.500 49 27.500 44 27.500 40z" fill="#f7f3fa"/></svg></div>
    <div class="app"><svg viewBox="0 0 64 64"><circle cx="32" cy="32" r="28" fill="#242424"/><circle cx="32" cy="32" r="25" fill="url(#gTv)"/><svg x="13.500" y="20.500" width="15.500" height="20.700" viewBox="0 0 384 512" fill="#fff"><use href="#apple"/></svg><text x="29.700" y="39" font-size="21" font-weight="500" fill="#fff" textLength="20" lengthAdjust="spacingAndGlyphs" font-family="Inter,sans-serif">tv</text></svg></div>
    <div class="app"><svg viewBox="0 0 64 64"><circle cx="32" cy="32" r="28" fill="url(#gStoreRim)"/><circle cx="32" cy="31.500" r="25.200" fill="url(#gStore)"/><g stroke="#f2f6fa" stroke-width="4.600" stroke-linecap="round"><path d="M34.700 16.500L24.500 36M29.500 16.500l15 27.500M16.500 36h31M21 41.800l-1.500 3"/></g></svg></div>
    <div class="app run-dot"><svg viewBox="0 0 64 64"><circle cx="32" cy="32" r="28" fill="#f6cd5b"/><path d="M32 32L44.500 32 32 60A28 28 0 0 1 8.200 17.300L21 39z" fill="#4a9f61"/><path d="M7.900 17.700A28 28 0 0 1 57.300 19.500H32L20 36z" fill="#d0543f"/><path d="M42.800 38.500L31.300 60H34l15-20-4-20h12.300H32z" fill="#f6cd5b"/><circle cx="32" cy="32" r="12.700" fill="#f1f1f1"/><circle cx="32" cy="32" r="10.200" fill="#5587ec"/></svg></div>
    <div class="app run-dot"><svg viewBox="0 0 64 64"><rect x="19.300" y="7.800" width="38" height="40" rx="2" fill="#2a66b0"/><path d="M19.300 14h12.700v12H19.300z" fill="#2f7fd0"/><path d="M32 14h12.700v12H32z" fill="#4fa5e3"/><path d="M44.700 14h12.600v12H44.700z" fill="#78d5fa"/><path d="M32 26h12.700v12H32z" fill="#2e78cb"/><path d="M44.700 26h12.600v12H44.700z" fill="#4ea2e2"/><path d="M32 38h27V30.500L38 43z" fill="#174683"/><path d="M16.800 36L37 44.500 59.200 31v22.500a2 2 0 0 1-2 2H16.800z" fill="#479bdf"/><path d="M37 44.500L59.200 31v24z" fill="#3b86d0"/><rect x="3.800" y="17.700" width="28.400" height="28.400" rx="2" fill="#2a70c8"/><text class="ms" x="18" y="39.300">O</text></svg></div>
    <div class="app run-dot"><svg viewBox="0 0 64 64"><circle cx="35.200" cy="32" r="24.300" fill="#c45736"/><path d="M35.200 7.700a24.300 24.300 0 0 1 24.300 24.300H35.200z" fill="#f29272"/><path d="M35.200 7.700V32H11a24.300 24.300 0 0 1 24.200-24.300z" fill="#e0734d"/><rect x="3.800" y="17.700" width="28.400" height="28.400" rx="2" fill="#b9431f"/><text class="ms" x="18" y="39.300">P</text></svg></div>
    <div class="app run-dot"><svg viewBox="0 0 64 64"><circle cx="50.500" cy="18.200" r="5.500" fill="#4f57c2"/><path d="M44 26h16a2 2 0 0 1 2 2v13a9 9 0 0 1-15 7z" fill="#4f57c2"/><circle cx="33.300" cy="15.700" r="8.200" fill="#7b83e8"/><path d="M20.500 26h25.700a2 2 0 0 1 2 2v14.500a14 14 0 0 1-27.700 1z" fill="#7b83e8"/><rect x="3.800" y="17.700" width="28.400" height="28.400" rx="2" fill="#474cb4"/><text class="ms" x="18" y="39.300">T</text></svg></div>
    <div class="app run-dot"><svg viewBox="0 0 64 64"><rect x="16.800" y="7.700" width="42.500" height="48.100" rx="2" fill="#2a5a38"/><path d="M16.800 9.700a2 2 0 0 1 2-2H38V20H16.800z" fill="#4ba066"/><path d="M38 7.700h19.300a2 2 0 0 1 2 2V20H38z" fill="#62c187"/><path d="M16.800 20H38v24H16.800z" fill="#367a46"/><path d="M38 20h21.300v12H38z" fill="#4b9f66"/><path d="M38 32h21.300v12H38z" fill="#367a46"/><rect x="4" y="17.700" width="28.400" height="28.400" rx="2" fill="#34773f"/><text class="ms" x="18.200" y="39.300">X</text></svg></div>
    <div class="app run-dot"><svg viewBox="0 0 64 64"><rect x="2.200" y="1" width="59.800" height="58.700" rx="10" fill="#5fcdfa"/><rect x="4.800" y="3.600" width="54.600" height="53.500" rx="8" fill="#10242d"/><text x="32.500" y="42.200" text-anchor="middle" font-size="38" font-weight="600" fill="#e3f5fd" textLength="33" lengthAdjust="spacingAndGlyphs" font-family="Open Sans,sans-serif">Ps</text></svg></div>
    <div class="app run-dot"><svg viewBox="0 0 64 64"><rect x="16.800" y="7.700" width="42.500" height="48.100" rx="2" fill="#1c4288"/><path d="M16.800 20V9.700a2 2 0 0 1 2-2h38.500a2 2 0 0 1 2 2V20z" fill="#5ba2e8"/><path d="M16.800 20h42.500v12H16.800z" fill="#417bd0"/><path d="M16.800 32h42.500v12H16.800z" fill="#295ab8"/><rect x="4" y="17.700" width="28.400" height="28.400" rx="2" fill="#2457b4"/><text class="ms" x="18.200" y="39.300">W</text></svg></div>
    <div class="divider"></div>
    <div class="app run-dot"><svg viewBox="0 0 64 64"><circle cx="32" cy="32" r="28" fill="#fff"/><circle cx="32" cy="32" r="25.700" fill="#50b8e5"/><path d="M46 13c8 5 12 12 11.700 20.500C57 47 46 57.700 32 57.700c-8 0-15-4-18.500-9.500-1.500-4 0-6 4-5 10 3 20-2 24-12 2-6 0-16 4.500-18.200z" fill="#1f4e70"/><circle cx="32" cy="32" r="17" fill="#82bb58"/><path d="M42.300 18.500C46 32 34 44 20.500 43.200A17 17 0 0 1 42.300 18.500z" fill="#fff"/></svg></div>
    <div class="app"><svg viewBox="0 0 64 64"><path d="M7.500 8.500L49 2.500l8.500 51.500-42 6.700z" fill="#fdfdfd"/><path d="M11.500 8l8 52" stroke="#eecaca" stroke-width=".6"/><path d="M8.500 15.500l42-6.500M9.300 20.500l42-6.500M10.100 25.500l42-6.500M10.900 30.500l42-6.500M11.700 35.500l42-6.500M12.500 40.500l42-6.500M13.300 45.500l42-6.500M14.100 50.500l42-6.500M14.900 55.500l42-6.500" stroke="#c2c2c2" stroke-width=".8"/><path d="M53.500 4.500L40.500 53l-2 6.500-.5-7L50.500 4z" fill="#8c9299"/><path d="M52.300 4.500L39.500 52" stroke="#d9eaf6" stroke-width="1.100"/><path d="M54 6l-5 19" stroke="#476d92" stroke-width="1"/></svg></div>
    <div class="app run-dot"><svg viewBox="0 0 64 64"><circle cx="32" cy="32" r="28" fill="#e5e5e5"/><circle cx="32" cy="32" r="25.800" fill="url(#gAtom)"/><g fill="none" stroke="#eef8ee" stroke-width="1.800"><ellipse cx="32" cy="32" rx="17.500" ry="6.800" transform="rotate(13 32 32)"/><ellipse cx="32" cy="32" rx="17.500" ry="6.800" transform="rotate(73 32 32)"/><ellipse cx="32" cy="32" rx="17.500" ry="6.800" transform="rotate(-47 32 32)"/></g><circle cx="32" cy="32" r="2.200" fill="#eef8ee"/></svg></div>
    <div class="app"><svg viewBox="0 0 64 64"><circle cx="32" cy="32" r="28" fill="url(#gQt)"/><circle cx="32" cy="32" r="18" fill="url(#gQtIn)"/><path d="M26.500 28c2-3 7.500-2 9.500 1.500C40 36 46 44 53 49l3 3.500 4 7.500h-8c-3-2-5-7-8.500-9.500C35 45 28 38 26.500 32z" fill="#43464b"/><path d="M50 46l6 2.500 4 11.500h-8z" fill="#2b2b2c"/></svg></div>
    <div class="divider"></div>
    <div class="app"><svg viewBox="0 0 64 64"><path d="M12 7q0-1 1-1h10l3 3h27q1 0 1 1v18H12z" fill="#85c8ef"/><path d="M8.600 10.500H50l6.500 13V46H8.600z" fill="#e9edf2"/><path d="M9 14h3M9 18h3M9 22h3M9 26h3M9 30h3M9 34h3M9 38h3" stroke="#8d98a8"/><path d="M12.500 7.500H34L52.500 27v34h-40z" fill="#fdfdfd"/><path d="M34 7.500c3 3 4 8 3.500 13 6 1 12 3 15 6.500C51 19 42 9 34 7.500z" fill="#dcdcdc"/><path d="M14 11h6M14 13.500h6" stroke="#b9b9f2" stroke-width="1.500"/><path d="M13 25h39M13 28h39M13 31h39" stroke="#b3b3b3" stroke-width="1.200" stroke-dasharray="3 1.500 5 2"/><text x="32.500" y="57.500" text-anchor="middle" font-size="8.300" fill="#555" textLength="22" lengthAdjust="spacingAndGlyphs" font-family="Inter,sans-serif">HTML</text></svg></div>
    <div class="app"><svg viewBox="0 0 64 64"><path d="M12 10l4-5 4 2 4-6 5 5 6-4 4 4 4-4 5 6 4 2-2 6H12z" fill="#f3f3f3"/><path d="M16 8l5 6 3-9 6 8 4-8 5 9 5-9" fill="none" stroke="#777" stroke-width="1.200"/><path d="M26 8l5-3 2 4-5 3z" fill="#58bfe6"/><path d="M36 8l6 2-3 4z" fill="#a5512f"/><path d="M9.500 8.500c2 5 43 5 45 0L50 53c-1 7.500-35 7.500-36 0z" fill="url(#gTrash)" fill-opacity=".95"/><path d="M9.500 8.500c2 6 43 6 45 0" fill="none" stroke="#fff" stroke-width="1"/><path d="M20 22c4 8 18 8 20-3M24 40c6 4 12 2 16-4M18 34l5-6" fill="none" stroke="#f4f4f4" stroke-opacity=".7" stroke-width="1.600"/></svg></div>
  </div>
</footer>
</body>
</html>
```
FILE: styles.css
```css
* { box-sizing: border-box; }

html { background: #040a14; }

/* The layout is written in desktop points (2560 x 1440) and enlarged to the display. */
body {
  margin: 0;
  width: 2560px;
  height: 1440px;
  overflow: hidden;
  zoom: 1.6;
  display: flex;
  flex-direction: column;
  font-family: "Liberation Sans", Arial, sans-serif;
  color: #212529;
  background: #101e2e;
}

svg { display: block; flex: none; }
.defs { position: absolute; }

/* ---------- menu bar ---------- */
.menubar {
  display: flex;
  justify-content: space-between;
  height: 22px;
  flex: none;
  background: linear-gradient(90deg, #cae4f1 0, #cde3f0 25%, #c8e3ef 38%, #c5e2ef 50%, #cce2ef 66%, #d4e5ef 75%, #e2e8f0 80%, #dae7f0 86%, #d3e5ee 100%);
  font: 14px/22px Inter, sans-serif;
  letter-spacing: -.28px;
  color: #1f3440;
}
.menubar-left {
  display: grid;
  grid-template-columns: 34px 73px 41px 43.200px 49.700px 65.100px 90px 63.800px 41.500px 69.600px 40px;
  padding-left: 20.700px;
}
.menubar-left b { font-weight: 700; letter-spacing: -.4px; }
.apple { width: 14px; height: 18.500px; margin-top: 1px; }
.menubar-right {
  display: grid;
  grid-template-columns: 32px 32px 28px 39px 103px 45px 18px;
  align-items: center;
  justify-items: center;
  margin-right: 23px;
}
.clock { letter-spacing: -.12px; }

/* ---------- browser window ---------- */
.window {
  flex: none;
  height: 1337px;
  margin-top: 1px;
  border-radius: 5px 5px 0 0;
  overflow: hidden;
  background: #fff;
  display: flex;
  flex-direction: column;
}
.tabstrip {
  display: flex;
  height: 42px;
  flex: none;
  background: #dfe0e4;
  border-top: 1px solid #eff0f2;
  font: 12px/16px Inter, sans-serif;
  letter-spacing: .06px;
  color: #3f4246;
}
.lights { display: flex; gap: 8px; width: 78.600px; flex: none; padding: 14.500px 0 0 13px; }
.lights i { width: 12px; height: 12px; border-radius: 50%; }
.red { background: #ec6a5e; }
.yellow { background: #f4bf4f; }
.green { background: #61c554; }
.tab {
  display: flex;
  align-items: center;
  width: 238.900px;
  flex: none;
  padding: 8px 10.400px 0 11.600px;
  background: linear-gradient(#8b8d91, #8b8d91) right 14.500px / 1px 20px no-repeat;
}
.tab .fav { width: 16px; height: 16px; margin-right: 8.400px; }
.tab .title { flex: 1; white-space: nowrap; min-width: 0; }
.tab .faded {
  letter-spacing: -.12px;
  -webkit-mask-image: linear-gradient(90deg, #000 calc(100% - 22px), rgba(0, 0, 0, .12));
  mask-image: linear-gradient(90deg, #000 calc(100% - 22px), rgba(0, 0, 0, .12));
}
.tab .x { width: 10px; height: 10px; margin-left: 9px; }
.tab .audio { width: 10px; height: 10px; margin: 0 3px 0 8px; }
.tab.last { background: none; }
.tab.active {
  position: relative;
  width: 240px;
  height: 34px;
  margin-top: 7px;
  padding-top: 1px;
  background: #fff;
  border-radius: 8px 8px 0 0;
}
.tab.active::before, .tab.active::after {
  content: "";
  position: absolute;
  bottom: 0;
  width: 8px;
  height: 8px;
}
.tab.active::before { left: -8px; background: radial-gradient(circle at 0 0, transparent 7.800px, #fff 8.200px); }
.tab.active::after { right: -8px; background: radial-gradient(circle at 100% 0, transparent 7.800px, #fff 8.200px); }
.newtab { width: 12px; height: 12px; margin: 18px 0 0 16.400px; }

.toolbar {
  display: flex;
  align-items: center;
  height: 37px;
  flex: none;
  padding: 0 6px;
  border-bottom: 1px solid #d9dbdf;
  background: #fff;
}
.slot { width: 32px; height: 28px; display: flex; align-items: center; justify-content: center; flex: none; }
.omnibox {
  display: flex;
  align-items: center;
  flex: 1;
  height: 28px;
  margin: 0 6px 0 6.600px;
  padding: 0 9px 0 9.400px;
  border-radius: 14px;
  background: #f1f3f4;
  font: 14px/28px Inter, sans-serif;
  color: #202124;
}
.scheme {
  margin-left: 8px;
  width: 31px;
  line-height: 16px;
  color: #5f6368;
  border-right: 1px solid #9aa0a6;
}
.url { margin-left: 9px; letter-spacing: -.055px; white-space: nowrap; }
.star { margin-left: auto; }
.avatar {
  width: 22px;
  height: 22px;
  border-radius: 50%;
  background: #5c6bb8;
  color: #fff;
  font: 12px/22px Roboto, sans-serif;
  text-align: center;
}

/* ---------- application page ---------- */
.page { display: flex; flex: 1; background: #f3f3f3; }
.sidebar { width: 250px; flex: none; background: #4f79b7; padding: 10px; }
.logo { width: 230px; height: 72px; overflow: visible; font: 900 54.600px Lato, sans-serif; }
.nav { margin-top: 42px; }
.nav a {
  display: flex;
  align-items: flex-start;
  gap: 13.300px;
  height: 36px;
  padding: 10px 0 0 10px;
  font-size: 12px;
  line-height: 14px;
  letter-spacing: -.03px;
  color: #fff;
  -webkit-text-stroke: .2px #fff;
}
.nav a.csr { height: 40px; }
.nav a.csr span { padding-top: 1px; }
.nav a.current { background: #6ed6b8; }

.main { display: flex; flex-direction: column; align-items: flex-start; }
.search {
  display: flex;
  align-items: center;
  width: 961px;
  height: 38px;
  margin: 43px 0 0 652px;
  padding-left: 9px;
  border: 1px solid #c6ccd2;
  border-radius: 19px;
  background: #fff;
  font-size: 16px;
  color: #6c757d;
}
.search span { margin-left: 27px; }

.calendars { display: flex; gap: 73px; margin: 38px 0 0 710px; }
.calendar {
  width: 300px;
  height: 210px;
  padding: 20px;
  border-radius: 10px;
  background: #fff;
  color: #000;
  font-size: 14px;
}
.calendar header { display: flex; align-items: center; justify-content: space-between; height: 22px; padding: 0 14.800px 0 15px; }
.calendar header svg { width: 10px; height: 14px; fill: none; stroke: #4f79b7; stroke-width: 3; }
.calendar h2 { margin: 0; font-size: 17.600px; font-weight: 400; letter-spacing: -.28px; line-height: 21px; }
.days { display: grid; grid-template-columns: repeat(7, 1fr); line-height: 23px; text-align: center; -webkit-text-stroke: .15px; }
.names { margin: 8.600px 0 1.800px; color: #4f79b7; -webkit-text-stroke: 0; }

.run {
  width: 132px;
  height: 38px;
  margin-left: 1553px;
  padding: 0;
  border: 0;
  border-radius: 4px;
  background: #4f79b7;
  color: #fff;
  font: 16px/37px "Liberation Sans", Arial, sans-serif;
}

.card {
  width: 1655.500px;
  height: 446px;
  margin: 12.400px 0 0 616.200px;
  padding: 0 5px;
  border: 1px solid #d6d6d6;
  border-radius: 4px;
  background: #fff;
}
.length { display: flex; align-items: center; height: 73px; padding-bottom: 7px; font-size: 16px; }
.select {
  display: flex;
  align-items: center;
  justify-content: space-between;
  width: 72.500px;
  height: 38px;
  margin: 2px 4.500px 0 4.200px;
  padding: 0 4px 0 16px;
  border: 1px solid #c6ccd2;
  border-radius: 4px;
  color: #495057;
}
.select svg { width: 9px; height: 6.500px; }

table { width: 1643px; border-collapse: collapse; table-layout: fixed; text-align: center; }
.c1 { width: 149px; } .c2 { width: 110px; } .c3 { width: 115px; } .c4 { width: 118px; }
.c5 { width: 99px; } .c6 { width: 107px; } .c7 { width: 135px; } .c8 { width: 205px; }
.c9 { width: 105px; } .c10 { width: 134px; } .c11 { width: 366px; }
th, td { padding: 0 1px 0 0; border: 1px solid #d2d3d4; vertical-align: middle; white-space: nowrap; }
th { position: relative; height: 56px; font-size: 14px; line-height: 21.700px; color: #5180c4; }
th.sorted { padding-right: 15px; }
th svg { position: absolute; right: 13px; top: 22.400px; width: 8px; height: 14px; fill: #c5d3ea; }
td { height: 52px; font-size: 14.400px; line-height: 20px; }
th.sorted svg { --up: #4f79b7; }
.sort-up { fill: var(--up, #c5d3ea); }

.pager { display: flex; align-items: center; justify-content: flex-end; margin-top: 14.200px; padding-right: 12px; font-size: 14px; letter-spacing: 1.200px; color: #a0a0a0; }
.pager b {
  width: 64px;
  height: 36px;
  margin: 0 9.600px 0 8.900px;
  border-radius: 3px;
  background: #4f79b7;
  box-shadow: 0 2px 3px rgba(0, 0, 0, .35);
  color: #fff;
  font-weight: 400;
  line-height: 36px;
  text-align: center;
}

/* ---------- desktop and dock ---------- */
.desktop { position: relative; display: flex; justify-content: center; height: 80px; }
.sea { position: absolute; left: 0; top: 0; }
.dock {
  position: relative;
  display: flex;
  align-items: center;
  width: 1770px;
  height: 80px;
  padding: 0 4px 4px;
  border-radius: 5px 5px 0 0;
  background: linear-gradient(90deg, rgba(67, 99, 135, .55), rgba(72, 94, 110, .1) 50%, rgba(83, 104, 135, .5)), linear-gradient(#495a6c, #47627f);
  box-shadow: 0 -4px 36px rgba(0, 0, 0, .14);
}
.app { position: relative; width: 68px; height: 64px; display: flex; justify-content: center; flex: none; }
.app > svg { width: 64px; height: 64px; overflow: visible; filter: drop-shadow(0 1px 1px rgba(0, 0, 0, .35)); }
.run-dot::after {
  content: "";
  position: absolute;
  left: 32px;
  top: 68px;
  width: 4px;
  height: 4px;
  border-radius: 50%;
  background: #05080b;
}
.divider { width: 31px; height: 60px; flex: none; background: linear-gradient(#1c3450, #1c3450) center / 1px 100% no-repeat; }
.ms { font: 700 22px "Open Sans", sans-serif; fill: #fff; text-anchor: middle; }
```
